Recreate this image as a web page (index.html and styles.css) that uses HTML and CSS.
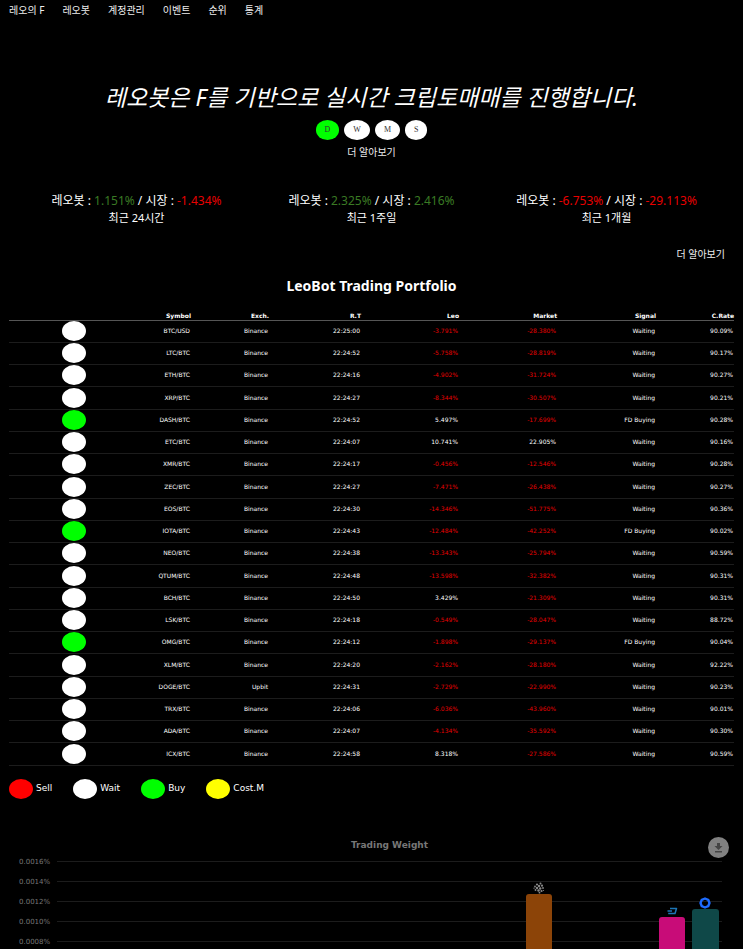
FILE: index.html
```html
<!DOCTYPE html>
<html lang="ko">
<head>
<meta charset="utf-8">
<meta name="viewport" content="width=device-width, initial-scale=1">
<title>LeoBot</title>
<link rel="stylesheet" href="styles.css">
</head>
<body>
<nav class="nav">
<a href="#">레오의 F</a>
<a href="#">레오봇</a>
<a href="#">계정관리</a>
<a href="#">이벤트</a>
<a href="#">순위</a>
<a href="#">통계</a>
</nav>

<header class="hero">
<h1>레오봇은 F를 기반으로 실시간 크립토매매를 진행합니다.</h1>
<div class="periods">
<button class="period active" type="button">D</button>
<button class="period" type="button">W</button>
<button class="period" type="button">M</button>
<button class="period" type="button">S</button>
</div>
<a class="more" href="#">더 알아보기</a>
</header>

<section class="stats">
<div class="stat">
<p class="returns">레오봇 : <span class="up">1.151%</span> / 시장 : <span class="down">-1.434%</span></p>
<p class="span">최근 24시간</p>
</div>
<div class="stat">
<p class="returns">레오봇 : <span class="up">2.325%</span> / 시장 : <span class="up">2.416%</span></p>
<p class="span">최근 1주일</p>
</div>
<div class="stat">
<p class="returns">레오봇 : <span class="down">-6.753%</span> / 시장 : <span class="down">-29.113%</span></p>
<p class="span">최근 1개월</p>
</div>
</section>
<div class="more-row"><a class="more" href="#">더 알아보기</a></div>

<main class="portfolio">
<h2>LeoBot Trading Portfolio</h2>
<table>
<colgroup><col class="c-state"><col class="c-symbol"><col class="c-exch"><col class="c-time"><col class="c-return"><col class="c-return"><col class="c-signal"><col class="c-rate"></colgroup>
<thead>
<tr><th></th><th>Symbol</th><th>Exch.</th><th>R.T</th><th>Leo</th><th>Market</th><th>Signal</th><th>C.Rate</th></tr>
</thead>
<tbody>
<tr><td><i class="dot wait"></i></td><td>BTC/USD</td><td>Binance</td><td>22:25:00</td><td class="down">-3.791%</td><td class="down">-28.380%</td><td>Waiting</td><td>90.09%</td></tr>
<tr><td><i class="dot wait"></i></td><td>LTC/BTC</td><td>Binance</td><td>22:24:52</td><td class="down">-5.758%</td><td class="down">-28.819%</td><td>Waiting</td><td>90.17%</td></tr>
<tr><td><i class="dot wait"></i></td><td>ETH/BTC</td><td>Binance</td><td>22:24:16</td><td class="down">-4.902%</td><td class="down">-31.724%</td><td>Waiting</td><td>90.27%</td></tr>
<tr><td><i class="dot wait"></i></td><td>XRP/BTC</td><td>Binance</td><td>22:24:27</td><td class="down">-8.344%</td><td class="down">-30.507%</td><td>Waiting</td><td>90.21%</td></tr>
<tr><td><i class="dot buy"></i></td><td>DASH/BTC</td><td>Binance</td><td>22:24:52</td><td>5.497%</td><td class="down">-17.699%</td><td>FD Buying</td><td>90.28%</td></tr>
<tr><td><i class="dot wait"></i></td><td>ETC/BTC</td><td>Binance</td><td>22:24:07</td><td>10.741%</td><td>22.905%</td><td>Waiting</td><td>90.16%</td></tr>
<tr><td><i class="dot wait"></i></td><td>XMR/BTC</td><td>Binance</td><td>22:24:17</td><td class="down">-0.456%</td><td class="down">-12.546%</td><td>Waiting</td><td>90.28%</td></tr>
<tr><td><i class="dot wait"></i></td><td>ZEC/BTC</td><td>Binance</td><td>22:24:27</td><td class="down">-7.471%</td><td class="down">-26.438%</td><td>Waiting</td><td>90.27%</td></tr>
<tr><td><i class="dot wait"></i></td><td>EOS/BTC</td><td>Binance</td><td>22:24:30</td><td class="down">-14.346%</td><td class="down">-51.775%</td><td>Waiting</td><td>90.36%</td></tr>
<tr><td><i class="dot buy"></i></td><td>IOTA/BTC</td><td>Binance</td><td>22:24:43</td><td class="down">-12.484%</td><td class="down">-42.252%</td><td>FD Buying</td><td>90.02%</td></tr>
<tr><td><i class="dot wait"></i></td><td>NEO/BTC</td><td>Binance</td><td>22:24:38</td><td class="down">-13.343%</td><td class="down">-25.794%</td><td>Waiting</td><td>90.59%</td></tr>
<tr><td><i class="dot wait"></i></td><td>QTUM/BTC</td><td>Binance</td><td>22:24:48</td><td class="down">-13.598%</td><td class="down">-32.382%</td><td>Waiting</td><td>90.31%</td></tr>
<tr><td><i class="dot wait"></i></td><td>BCH/BTC</td><td>Binance</td><td>22:24:50</td><td>3.429%</td><td class="down">-21.309%</td><td>Waiting</td><td>90.31%</td></tr>
<tr><td><i class="dot wait"></i></td><td>LSK/BTC</td><td>Binance</td><td>22:24:18</td><td class="down">-0.549%</td><td class="down">-28.047%</td><td>Waiting</td><td>88.72%</td></tr>
<tr><td><i class="dot buy"></i></td><td>OMG/BTC</td><td>Binance</td><td>22:24:12</td><td class="down">-1.898%</td><td class="down">-29.137%</td><td>FD Buying</td><td>90.04%</td></tr>
<tr><td><i class="dot wait"></i></td><td>XLM/BTC</td><td>Binance</td><td>22:24:20</td><td class="down">-2.162%</td><td class="down">-28.180%</td><td>Waiting</td><td>92.22%</td></tr>
<tr><td><i class="dot wait"></i></td><td>DOGE/BTC</td><td>Upbit</td><td>22:24:31</td><td class="down">-2.729%</td><td class="down">-22.990%</td><td>Waiting</td><td>90.23%</td></tr>
<tr><td><i class="dot wait"></i></td><td>TRX/BTC</td><td>Binance</td><td>22:24:06</td><td class="down">-6.036%</td><td class="down">-43.960%</td><td>Waiting</td><td>90.01%</td></tr>
<tr><td><i class="dot wait"></i></td><td>ADA/BTC</td><td>Binance</td><td>22:24:07</td><td class="down">-4.134%</td><td class="down">-35.592%</td><td>Waiting</td><td>90.30%</td></tr>
<tr><td><i class="dot wait"></i></td><td>ICX/BTC</td><td>Binance</td><td>22:24:58</td><td>8.318%</td><td class="down">-27.586%</td><td>Waiting</td><td>90.59%</td></tr>
</tbody>
</table>
<ul class="legend">
<li><i class="dot sell"></i>Sell</li>
<li><i class="dot wait"></i>Wait</li>
<li><i class="dot buy"></i>Buy</li>
<li><i class="dot cost"></i>Cost.M</li>
</ul>
</main>

<section class="chart">
<h3>Trading Weight</h3>
<button class="download" type="button" aria-label="Download">
<svg viewBox="0 0 21 21" width="21" height="21"><path d="M9 6h3v3h2.500l-4 4-4-4H9z M7 14h7v1.500H7z" fill="#444"/></svg>
</button>
<div class="plot">
<ol class="scale">
<li>0.0016%</li>
<li>0.0014%</li>
<li>0.0012%</li>
<li>0.0010%</li>
<li>0.0008%</li>
</ol>
<div class="bars">
<div class="slot iota">
<svg class="coin" viewBox="0 0 12 12" width="12" height="12"><g fill="#888"><circle cx="4" cy="2.500" r="1.100"/><circle cx="7.500" cy="1.500" r="1"/><circle cx="6" cy="4" r="1.200"/><circle cx="9" cy="3.700" r="1.100"/><circle cx="2" cy="4.500" r=".9"/><circle cx="4" cy="6" r="1.200"/><circle cx="7.200" cy="6.500" r="1.200"/><circle cx="10" cy="6" r=".9"/><circle cx="2.500" cy="8" r=".9"/><circle cx="5.500" cy="8.500" r="1.200"/><circle cx="8.500" cy="9" r="1.100"/><circle cx="6.500" cy="10.700" r=".9"/><circle cx="10.500" cy="8.500" r=".6"/><circle cx="1" cy="6.200" r=".6"/></g></svg>
<div class="bar" style="height:79.4%"></div>
</div>
<div class="slot dash">
<svg class="coin" viewBox="0 0 12 12" width="12" height="12"><path d="M4 3.500h6.500L9 8.500H2.200M1.500 6h4.500" fill="none" stroke="#1c75b5" stroke-width="1.500" stroke-linejoin="round"/></svg>
<div class="bar" style="height:65.6%"></div>
</div>
<div class="slot chain">
<svg class="coin" viewBox="0 0 12 12" width="12" height="12"><path d="M6 1.500l3.200 1.300L10.500 6 9.200 9.200 6 10.500 2.800 9.200 1.500 6l1.300-3.200z" fill="none" stroke="#1e6cff" stroke-width="2.400" stroke-linejoin="round"/></svg>
<div class="bar" style="height:70.6%"></div>
</div>
</div>
</div>
</section>
</body>
</html>
```
FILE: styles.css
```css
* { box-sizing: border-box; }

body {
  margin: 0;
  height: 100vh;
  overflow: hidden;
  display: flex;
  flex-direction: column;
  background: #000;
  color: #fff;
  font-family: "Noto Sans", "Noto Sans CJK KR", sans-serif;
  font-size: 10px;
}

h1, h2, h3, p, ul, ol { margin: 0; padding: 0; }
ul, ol { list-style: none; }
a { color: #eee; text-decoration: none; }
button { border: 0; padding: 0; }

.nav {
  display: flex;
  gap: 18px;
  padding: 0 9px;
  line-height: 21px;
}

.hero {
  display: flex;
  flex-direction: column;
  align-items: center;
  padding: 59px 9px 0;
  text-align: center;
}
.hero h1 {
  font-size: 23px;
  font-weight: 400;
  font-style: italic;
  line-height: 34px;
}
.periods { display: flex; gap: 5px; margin: 6px 0 2px; }
.period {
  height: 20px;
  padding: 0 9px;
  border-radius: 50%;
  background: #fff;
  color: #333;
  font: 8px/20px "Liberation Serif", serif;
}
.period.active { background: #0f0; }
.more { line-height: 20px; }

.stats { display: flex; padding: 30px 19px 0; text-align: center; }
.stat { flex: 1; }
.returns { font-size: 12px; line-height: 17px; }
.span { font-size: 11px; line-height: 17px; }
.up { color: #3a7a24; }
.down { color: #e80000; }
.more-row { padding: 18px 18px 0; text-align: right; line-height: 20px; }

.portfolio { padding: 10px 9px 0; font-family: "DejaVu Sans", sans-serif; }
.portfolio h2 {
  font: 700 14px/24px "Noto Sans", sans-serif;
  text-align: center;
}

table {
  width: 100%;
  margin-top: 11px;
  table-layout: fixed;
  border-collapse: collapse;
  font-size: 6px;
}
.c-state { width: 130px; }
.c-symbol { width: 52px; }
.c-exch, .c-rate { width: 78px; }
.c-time { width: 92px; }
.c-return { width: 98px; }
.c-signal { width: 99px; }
th, td { padding: 0 1px 0 0; text-align: right; white-space: nowrap; }
th {
  height: 11px;
  padding: 0;
  line-height: 8px;
  vertical-align: bottom;
  border-bottom: 1px solid #555;
}
td { height: 22px; line-height: 20px; border-bottom: 1px solid #1c1c1c; }
tr:nth-child(4n) td { height: 23px; }
td:first-child { text-align: center; }

.dot {
  display: inline-block;
  width: 24px;
  height: 20px;
  border-radius: 50%;
  vertical-align: middle;
}
.wait { background: #fff; }
.buy { background: #0f0; }
.sell { background: #f00; }
.cost { background: #ff0; }

.legend { display: flex; gap: 21px; padding-top: 13px; font-size: 9px; line-height: 18px; }
.legend li { display: flex; gap: 3px; }

.chart {
  position: relative;
  flex: 1;
  min-height: 0;
  padding: 38px 21px 0 19px;
  overflow: hidden;
  font-family: "DejaVu Sans", sans-serif;
}
.chart h3 {
  padding: 2px 0 0 38px;
  color: #777;
  font-size: 9px;
  line-height: 13px;
  text-align: center;
}
/* Floats over the top right corner of the plot. */
.download {
  position: absolute;
  top: 38px;
  right: 14px;
  width: 21px;
  height: 21px;
  border-radius: 50%;
  background: #808080;
}
.download svg { display: block; }

.plot { position: relative; }
.scale { color: #777; font-size: 7px; }
.scale li {
  display: flex;
  align-items: center;
  gap: 7px;
  height: 20px;
}
.scale li::after { content: ""; flex: 1; height: 1px; background: #1c1c1c; }

/* Bars are drawn over the grid lines and share their zero line. */
.bars {
  position: absolute;
  top: 10px;
  left: 38px;
  right: 0;
  height: 160px;
  display: grid;
  grid-template-columns: repeat(20, 1fr);
}
.slot {
  grid-row: 1;
  height: 160px;
  display: flex;
  flex-direction: column;
  justify-content: flex-end;
  align-items: center;
}
.coin { flex: none; }
.bar { flex: none; width: 80%; border-radius: 3px 3px 0 0; }
.iota { grid-column: 15; }
.iota .bar { background: #8c4408; }
.dash { grid-column: 19; }
.dash .bar { background: #c80c78; }
.chain { grid-column: 20; }
.chain .bar { background: #0f4848; }
```
